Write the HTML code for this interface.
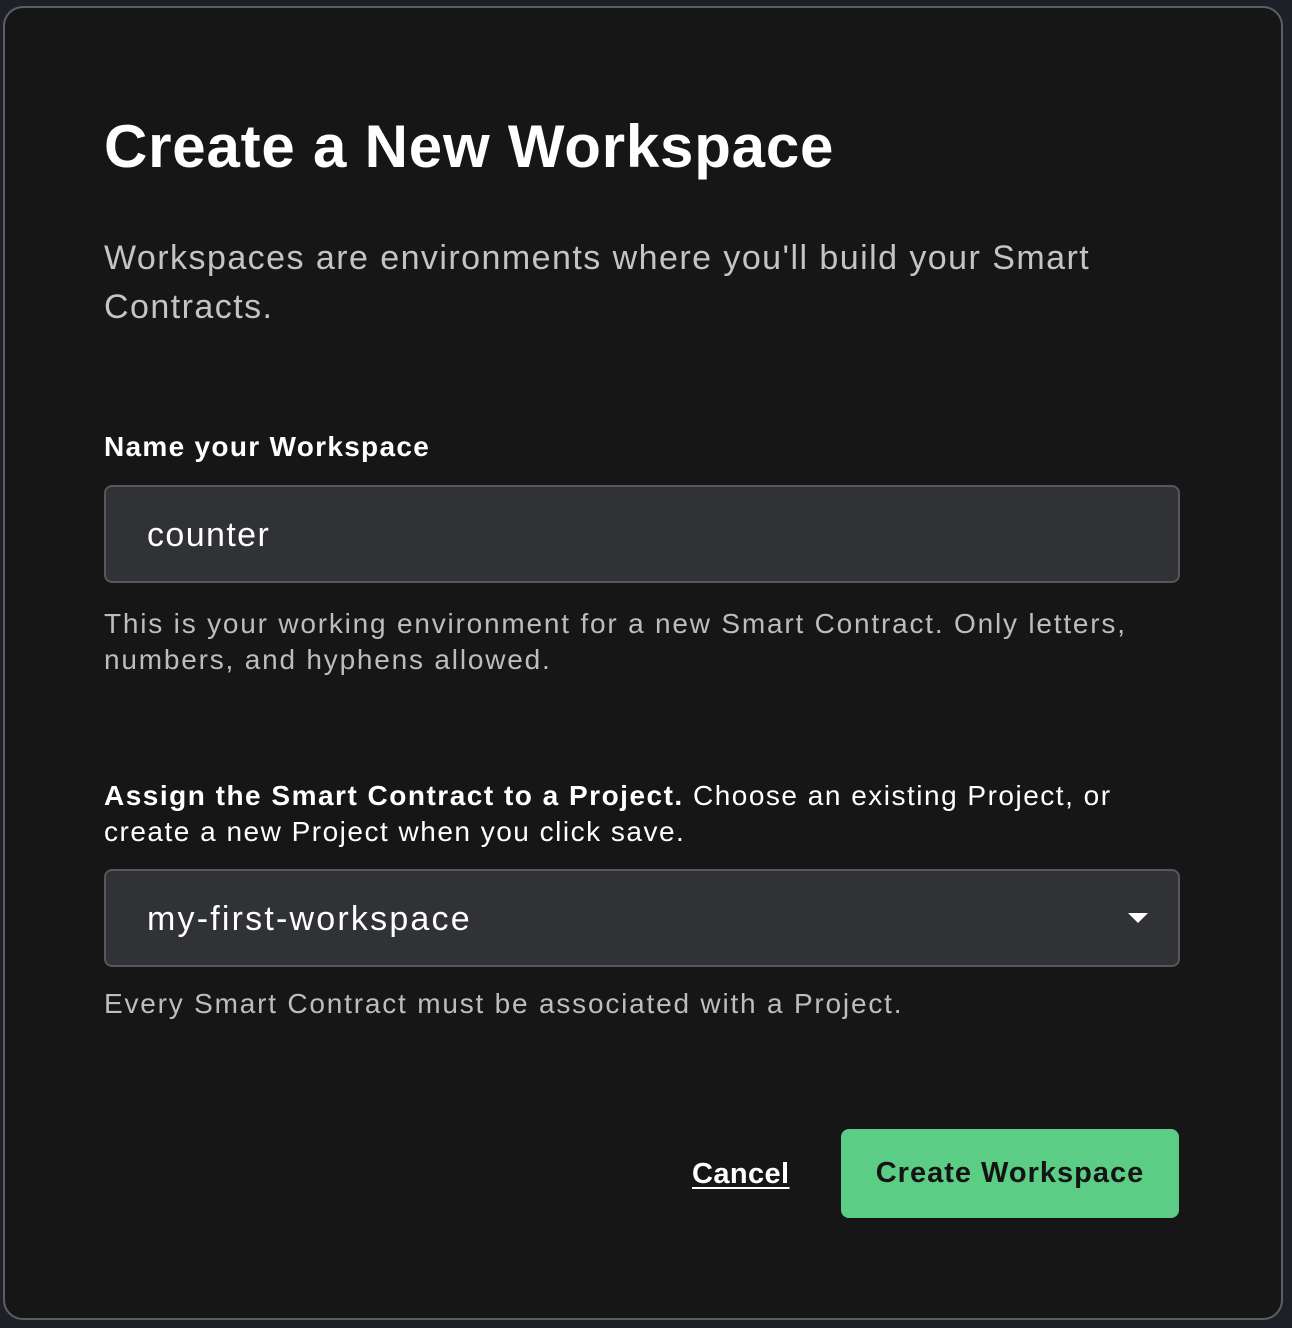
<!DOCTYPE html>
<html><head><meta charset="utf-8"><style>
html,body{margin:0;padding:0;width:1292px;height:1328px;background:#1d2027;overflow:hidden;font-family:"Liberation Sans",sans-serif;}
.modal{position:absolute;left:3px;top:6px;width:1276px;height:1310px;background:#161616;border:2px solid #5b5e63;border-radius:20px;box-sizing:content-box;}
.c{position:absolute;left:99px;}
h1{position:absolute;left:99px;top:104px;margin:0;font-size:60px;font-weight:bold;color:#fff;letter-spacing:0.8px;line-height:70px;}
.desc{top:226px;width:1040px;font-size:34px;line-height:49px;color:#c4c4c6;letter-spacing:1.45px;}
.lbl{font-size:28px;font-weight:bold;color:#fff;letter-spacing:1.3px;}
.box{position:absolute;left:99px;width:1076px;height:98px;background:#313235;border:2px solid #55575c;border-radius:8px;box-sizing:border-box;}
.box span{position:absolute;left:41px;top:0;line-height:96px;font-size:34px;color:#fff;letter-spacing:1.4px;}
.help{font-size:28px;line-height:36px;color:#bdbdc0;width:1040px;letter-spacing:1.8px;}
.arrow{position:absolute;right:30px;top:42px;width:0;height:0;border-left:10px solid transparent;border-right:10px solid transparent;border-top:10px solid #fff;}
.cancel{position:absolute;left:687px;top:1150px;font-size:29px;font-weight:bold;color:#fff;text-decoration:underline;text-underline-offset:4px;letter-spacing:0.4px;}
.btn{position:absolute;left:836px;top:1121px;width:338px;height:89px;background:#5bcd85;border-radius:8px;color:#141414;font-size:29px;font-weight:bold;line-height:89px;text-align:center;letter-spacing:1px;}
</style></head><body>
<div class="modal">
<h1>Create a New Workspace</h1>
<div class="c desc">Workspaces are environments where you'll build your Smart Contracts.</div>
<div class="c lbl" style="top:423px;">Name your Workspace</div>
<div class="box" style="top:477px;"><span>counter</span></div>
<div class="c help" style="top:598px;">This is your working environment for a new Smart Contract. Only letters, numbers, and hyphens allowed.</div>
<div class="c help" style="top:770px;color:#fff;width:1030px;letter-spacing:1.5px;"><b>Assign the Smart Contract to a Project.</b> Choose an existing Project, or create a new Project when you click save.</div>
<div class="box" style="top:861px;"><span style="letter-spacing:2.2px;">my-first-workspace</span><div class="arrow"></div></div>
<div class="c help" style="top:978px;width:1100px;">Every Smart Contract must be associated with a Project.</div>
<div class="cancel">Cancel</div>
<div class="btn">Create Workspace</div>
</div>
</body></html>
